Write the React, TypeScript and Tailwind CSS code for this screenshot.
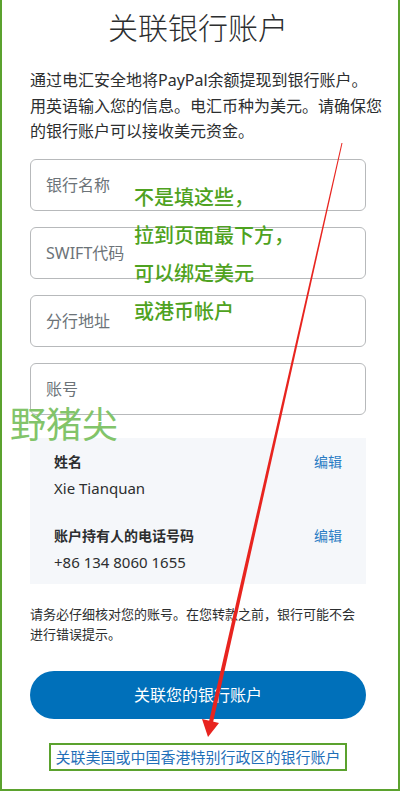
const fields = ['银行名称', 'SWIFT代码', '分行地址', '账号'];

const InfoRow = ({ label, value }: { label: string; value: string }) => (
  <div className="flex items-start justify-between">
    <div>
      <div className="text-[14px] leading-[20px] font-bold text-[#2c2e2f]">{label}</div>
      <div className="mt-[4px] text-[15px] leading-[24px] text-[#2c2e2f]">{value}</div>
    </div>
    <button className="text-[14px] leading-[20px] text-[#2a7cc4]">编辑</button>
  </div>
);

export default function App() {
  return (
    <div className="relative w-[400px] h-[791px] overflow-hidden bg-white border-x-2 border-b-2 border-[#5ba22e] font-['Noto_Sans','Noto_Sans_CJK_SC',sans-serif] text-[#2c2e2f]">
      <div className="pl-[28px] pr-[32px]">
        <h1 className="pt-[8px] text-center text-[30px] leading-[40px] font-light text-[#2c2e2f]">
          关联银行账户
        </h1>

        <p className="mt-[20px] text-[16px] leading-[25.5px] whitespace-nowrap">
          通过电汇安全地将PayPal余额提现到银行账户。
          <br />
          用英语输入您的信息。电汇币种为美元。请确保您
          <br />
          的银行账户可以接收美元资金。
        </p>

        <div className="mt-[14px] flex flex-col gap-[16px]">
          {fields.map((f) => (
            <div
              key={f}
              className="h-[52px] flex items-center rounded-[6px] border border-[#b7b9bb] px-[15px] text-[16px] text-[#6c7378]"
            >
              {f}
            </div>
          ))}
        </div>

        <div className="mt-[23px] bg-[#f5f7fa] px-[24px] pt-[14px] pb-[10px] flex flex-col gap-[26px]">
          <InfoRow label="姓名" value="Xie Tianquan" />
          <InfoRow label="账户持有人的电话号码" value="+86 134 8060 1655" />
        </div>

        <p className="mt-[20px] text-[13px] leading-[20px] text-[#2c2e2f] whitespace-nowrap">
          请务必仔细核对您的账号。在您转款之前，银行可能不会
          <br />
          进行错误提示。
        </p>

        <button className="mt-[27px] w-full h-[48px] rounded-full bg-[#0070ba] text-white text-[16px]">
          关联您的银行账户
        </button>

        <div className="mt-[24px] flex justify-center">
          <span className="inline-block border-2 border-[#5ba22e] px-[4px] text-[15px] leading-[24px] text-[#1f6fb8] whitespace-nowrap">
            关联美国或中国香港特别行政区的银行账户
          </span>
        </div>
      </div>

      {/* annotations over the screenshot */}
      <div className="absolute left-[132px] top-[179px] text-[20px] leading-[38px] font-medium text-[#4ea220] whitespace-nowrap">
        <div>不是填这些，</div>
        <div>拉到页面最下方，</div>
        <div>可以绑定美元</div>
        <div>或港币帐户</div>
      </div>

      <div className="absolute left-[8px] top-[406px] text-[36px] leading-[38px] text-[#82c46a] whitespace-nowrap">
        野猪尖
      </div>

      <svg className="absolute left-[-2px] top-0 pointer-events-none" width="400" height="791" viewBox="0 0 400 791">
        <polygon points="341.5,143 342.5,143 213,722.4 209,721.6" fill="#e8241f" />
        <polygon points="208,737 202,719 219,723" fill="#e8241f" />
      </svg>
    </div>
  );
}
